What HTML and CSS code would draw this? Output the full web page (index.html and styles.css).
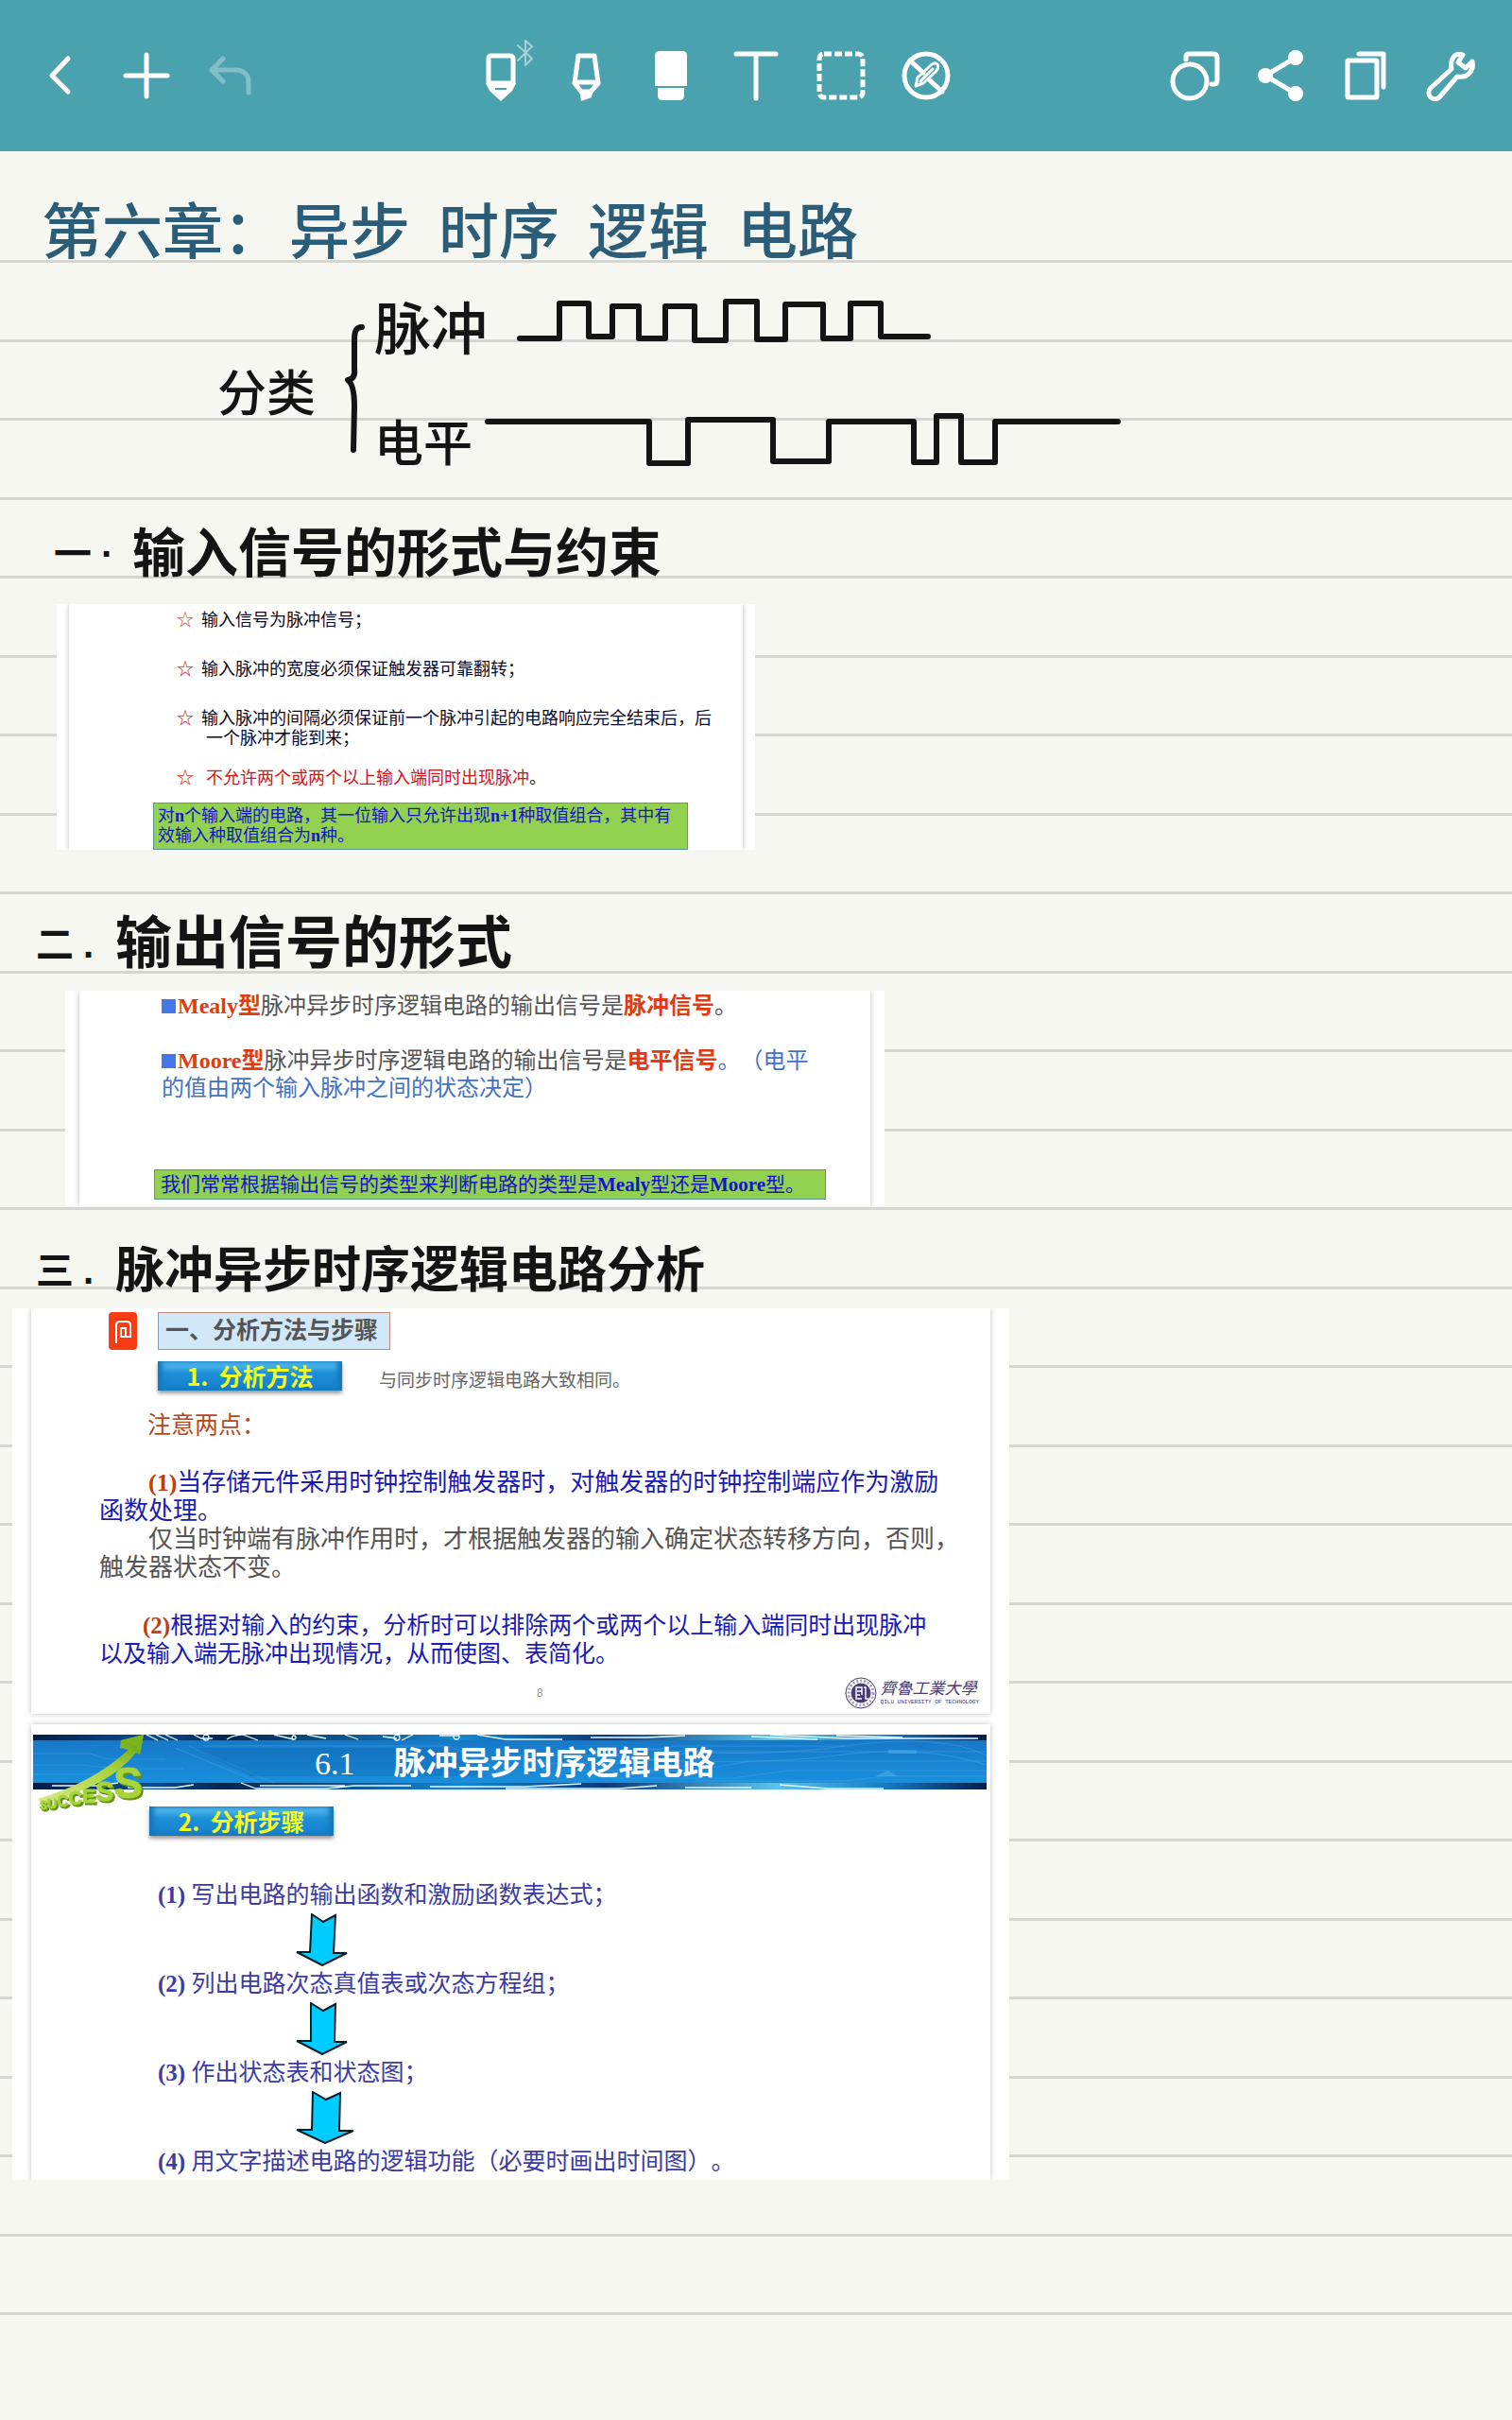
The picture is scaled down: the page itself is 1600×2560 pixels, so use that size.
FILE: index.html
```html
<!DOCTYPE html>
<html lang="zh-CN">
<head>
    <meta charset="utf-8">
    <meta name="viewport" content="width=device-width, initial-scale=1">
    <title>第六章：异步时序逻辑电路</title>
    <link rel="stylesheet" href="styles.css">
</head>
<body>
    <header class="toolbar">
        <div class="tools">
            <button type="button" class="tool" aria-label="返回">
                <svg viewBox="0 0 60 60"><path d="M37 12L20 30L37 47"/></svg>
            </button>
            <button type="button" class="tool" aria-label="添加">
                <svg viewBox="0 0 60 60"><path d="M30 8V52M8 30H52"/></svg>
            </button>
            <button type="button" class="tool" aria-label="撤销" disabled>
                <svg viewBox="0 0 60 60"><path d="M21 12L9 24L21 36M9 24H34C43 24 48 29 48 37V48"/></svg>
            </button>
        </div>
        <div class="tools">
            <button type="button" class="tool" aria-label="钢笔">
                <svg viewBox="0 0 60 60">
                    <path d="M17 38V12Q17 9 20 9H39Q43 9 43 12V38Z"/>
                    <path class="solid" d="M14 38H46L42 46L30 57L18 46Z"/>
                    <path class="cut" d="M24 44H36"/>
                    <path class="bluetooth" d="M48 -2L63 12L56 19V-7L63 -1L48 14"/>
                </svg>
            </button>
            <button type="button" class="tool" aria-label="荧光笔">
                <svg viewBox="0 0 60 60">
                    <path d="M22 9H39L43 38L35 47H25L18 38Z"/>
                    <path d="M19 37H42"/>
                    <path class="solid" d="M23 45H38L36 53L25 57Z"/>
                </svg>
            </button>
            <button type="button" class="tool" aria-label="橡皮擦">
                <svg viewBox="0 0 60 60">
                    <path class="solid" d="M13 41V9Q13 4 18 4H42Q47 4 47 9V41Z"/>
                    <path class="solid" d="M16 43H44V51Q44 56 39 56H21Q16 56 16 51Z"/>
                </svg>
            </button>
            <button type="button" class="tool" aria-label="文字">
                <svg viewBox="0 0 60 60"><path d="M9 7H51M30 7V54"/></svg>
            </button>
            <button type="button" class="tool" aria-label="选择">
                <svg viewBox="0 0 60 60"><rect class="dashed" x="7" y="7" width="46" height="46" rx="5"/></svg>
            </button>
            <button type="button" class="tool" aria-label="停用手写笔">
                <svg viewBox="0 0 60 60">
                    <circle cx="30" cy="30" r="23"/>
                    <path d="M13 14L27 27M34 35L47 47"/>
                    <path class="thin" d="M19 41L21 32L35 19Q39 15 42 18Q44 21 40 26L27 38Z"/>
                    <path class="thin" d="M24 36L37 23"/>
                </svg>
            </button>
        </div>
        <div class="tools">
            <button type="button" class="tool" aria-label="图形">
                <svg viewBox="0 0 60 60">
                    <circle cx="24" cy="36" r="18"/>
                    <path d="M20 13V10Q20 7 23 7H49Q53 7 53 11V35Q53 39 50 39H47"/>
                </svg>
            </button>
            <button type="button" class="tool" aria-label="分享">
                <svg viewBox="0 0 60 60">
                    <path d="M46 11L14 30L46 49"/>
                    <circle class="solid" cx="46" cy="11" r="8"/>
                    <circle class="solid" cx="14" cy="30" r="8"/>
                    <circle class="solid" cx="46" cy="49" r="8"/>
                </svg>
            </button>
            <button type="button" class="tool" aria-label="页面">
                <svg viewBox="0 0 60 60">
                    <rect x="11" y="14" width="31" height="39" rx="1"/>
                    <path d="M23 7H49V42"/>
                </svg>
            </button>
            <button type="button" class="tool" aria-label="设置">
                <svg viewBox="0 0 60 60"><path d="M31 23L9 43C3 49 11 59 18 53L37 31C48 33 55 25 53 15L46 22L38 16L43 8C35 5 29 12 31 23Z"/></svg>
            </button>
        </div>
    </header>

    <main class="paper">
        <h1 class="chapter">
            <span class="chapter-label">第六章：</span><span>异步</span><span>时序</span><span>逻辑</span><span>电路</span>
        </h1>

        <div class="classify">
            <span class="classify-name">分类</span>
            <svg class="brace" width="22" height="138" viewBox="0 0 22 138">
                <path d="M19 4C13 4 11 8 11 18V48C12 56 9 59 4 60C10 64 11 76 11 88L10 134"/>
            </svg>
            <div class="kinds">
                <div class="kind">
                    <span class="kind-name kind-pulse">脉冲</span>
                    <!-- 脉冲波形 -->
                    <svg class="wave" width="440" height="52" viewBox="546 316 440 52">
                        <path d="M550 357H592V320H623V355H648V323H676V357H704V323H735V359H768V318H801V358H831V321H871V357H900V320H932V355H982"/>
                    </svg>
                </div>
                <div class="kind">
                    <span class="kind-name">电平</span>
                    <!-- 电平波形 -->
                    <svg class="wave" width="680" height="60" viewBox="510 436 680 60">
                        <path d="M516 447H687V491H728V445H818V489H877V447H967V490H991V441H1017V490H1053V447H1183"/>
                    </svg>
                </div>
            </div>
        </div>

        <section class="part part-one">
            <h2 class="heading"><span class="number"><span>一</span><span>·</span></span>输入信号的形式与约束</h2>
            <div class="card card-rules">
                <div class="slide">
                    <ul class="rules">
                        <li><span class="star star-orange">☆</span><span>输入信号为脉冲信号；</span></li>
                        <li><span class="star">☆</span><span>输入脉冲的宽度必须保证触发器可靠翻转；</span></li>
                        <li class="rule-long"><span class="star">☆</span><span>输入脉冲的间隔必须保证前一个脉冲引起的电路响应完全结束后，后<br><span class="hang">一个脉冲才能到来；</span></span></li>
                        <li><span class="star">☆</span><span class="hang warn">不允许两个或两个以上输入端同时出现脉冲<span class="stop">。</span></span></li>
                    </ul>
                    <p class="note note-rules">对<b>n</b>个输入端的电路，其一位输入只允许出现<b>n+1</b>种取值组合，其中有<br>效输入种取值组合为<b>n</b>种。</p>
                </div>
            </div>
        </section>

        <section class="part part-two">
            <h2 class="heading"><span class="number"><span>二</span><span>.</span></span>输出信号的形式</h2>
            <div class="card card-types">
                <div class="slide">
                    <p class="type"><i class="square"></i><b class="key">Mealy型</b>脉冲异步时序逻辑电路的输出信号是<b class="key">脉冲信号</b>。</p>
                    <p class="type"><i class="square"></i><b class="key">Moore型</b>脉冲异步时序逻辑电路的输出信号是<b class="key">电平信号</b><span class="remark">。（电平<br>的值由两个输入脉冲之间的状态决定）</span></p>
                    <p class="note note-types">我们常常根据输出信号的类型来判断电路的类型是<b>Mealy</b>型还是<b>Moore</b>型。</p>
                </div>
            </div>
        </section>

        <section class="part part-three">
            <h2 class="heading"><span class="number"><span>三</span><span>.</span></span>脉冲异步时序逻辑电路分析</h2>
            <div class="card card-analysis">
                <div class="slide method">
                    <div class="method-title">
                        <svg class="badge" width="30" height="40" viewBox="0 0 30 40">
                            <rect width="30" height="40" rx="4" fill="#fa3c14"/>
                            <path d="M8 33V14Q8 10 12 10H19Q23 10 23 14V26H13V17H18V25" fill="none" stroke="#fff" stroke-width="2"/>
                        </svg>
                        <h3 class="method-name">一、分析方法与步骤</h3>
                    </div>
                    <div class="method-line">
                        <h4 class="plate">1. &nbsp;分析方法</h4>
                        <span class="similar">与同步时序逻辑电路大致相同。</span>
                    </div>
                    <p class="attention">注意两点：</p>
                    <div class="points">
                        <p class="point"><b>(1)</b>当存储元件采用时钟控制触发器时，对触发器的时钟控制端应作为激励<br>函数处理。</p>
                        <p class="point point-gray">仅当时钟端有脉冲作用时，才根据触发器的输入确定状态转移方向，否则，<br>触发器状态不变。</p>
                        <p class="point point-second"><b>(2)</b>根据对输入的约束，分析时可以排除两个或两个以上输入端同时出现脉冲<br>以及输入端无脉冲出现情况，从而使图、表简化。</p>
                    </div>
                    <div class="slide-foot">
                        <span class="page-number">8</span>
                        <div class="school">
                            <svg width="34" height="34" viewBox="0 0 34 34" fill="none" stroke="#493a72">
                                <circle cx="17" cy="17" r="16"/>
                                <circle cx="17" cy="17" r="13" stroke="#a79fbd" stroke-width="3" stroke-dasharray="2 2"/>
                                <circle cx="17" cy="17" r="10" fill="#493a72"/>
                                <path d="M12 22V11H18V15H13M16 19H12V23H18M20 11H22V23H25M18 15V19" stroke="#fff" stroke-width="1.4"/>
                            </svg>
                            <div class="school-text">
                                <span class="school-name">齊魯工業大學</span>
                                <span class="school-latin">QILU UNIVERSITY OF TECHNOLOGY</span>
                            </div>
                        </div>
                    </div>
                </div>

                <div class="slide steps-slide">
                    <div class="banner">
                        <svg class="circuit" viewBox="0 0 1009 58" preserveAspectRatio="none">
                            <defs>
                                <linearGradient id="edge">
                                    <stop offset="0" stop-color="#021c44"/>
                                    <stop offset=".12" stop-color="#0a4f98"/>
                                    <stop offset=".2" stop-color="#04264f"/>
                                    <stop offset=".45" stop-color="#1686d0"/>
                                    <stop offset=".6" stop-color="#0a3a78"/>
                                    <stop offset=".78" stop-color="#5ac4ee"/>
                                    <stop offset=".9" stop-color="#1576c0"/>
                                    <stop offset="1" stop-color="#031d48"/>
                                </linearGradient>
                                <linearGradient id="sea" x2="0" y2="1">
                                    <stop offset="0" stop-color="#1679c8"/>
                                    <stop offset="1" stop-color="#198fdc"/>
                                </linearGradient>
                            </defs>
                            <rect width="1009" height="58" fill="url(#edge)"/>
                            <rect y="6" width="1009" height="45" fill="url(#sea)"/>
                            <g fill="none" stroke="#4ba9e6" stroke-opacity=".45">
                                <path d="M0 20H60L80 26H140M0 32H50L90 36H160M0 42H70M150 14L240 51M165 12L255 51M180 12H440L500 40"/>
                                <path d="M520 30H640L700 18H1009M560 38H700L760 28H1009M600 46H740L800 38H1009M500 22H620L680 12H860M700 49H860L900 44H1009"/>
                                <path d="M640 14Q760 26 860 12T1009 22M620 24Q760 34 850 22T1009 32"/>
                            </g>
                            <path d="M170 14H430L480 44H230Z" fill="#0e62a8" fill-opacity=".28"/>
                            <g fill="none" stroke="#e4f8ff" stroke-width="1.3">
                                <path d="M120 0L132 6M130 0L143 6M140 0L153 6M170 0L178 4H190M205 5Q212 0 222 0L238 6M255 0L276 5M290 0L310 4M330 0L344 5M370 2L385 4M390 6L402 0M430 1H450M470 0L500 5H560M590 3H650L690 1M760 2L830 5M780 0L860 4H1000M850 1L920 3"/>
                                <path d="M20 54H70L90 51M100 56H150L170 53M220 51L236 57H310L340 54H400M240 54H330M420 55H520L580 52M500 57H620L660 54M690 56H760M790 53L840 57H900"/>
                                <circle cx="183" cy="3" r="3"/><circle cx="276" cy="3" r="2"/><circle cx="385" cy="3" r="3"/><circle cx="448" cy="2" r="3"/>
                            </g>
                            <path d="M890 44L905 38L915 44ZM905 16H935V20H905Z" fill="#5bbdf0" fill-opacity=".4"/>
                        </svg>
                        <h3 class="banner-title"><span class="banner-number">6.1</span><span>脉冲异步时序逻辑电路</span></h3>
                        <svg class="success" width="124" height="96" viewBox="0 0 124 96">
                            <defs>
                                <linearGradient id="leaf" x1="0" y1="1" x2="1" y2="0">
                                    <stop offset="0" stop-color="#d8ec8a"/>
                                    <stop offset=".6" stop-color="#a9d23c"/>
                                    <stop offset="1" stop-color="#5f9c12"/>
                                </linearGradient>
                            </defs>
                            <path d="M2 71Q60 54 98 19L89 17L90 9L114 3L110 24L106 22Q78 58 6 76Z" fill="url(#leaf)"/>
                            <path d="M90 9L114 3L110 24L106 15Z" fill="#7db31c"/>
                            <text class="success-word" x="4" y="82"><tspan font-size="12">S</tspan><tspan font-size="14" dy="-1">U</tspan><tspan font-size="17" dy="-2">C</tspan><tspan font-size="20" dy="-2">C</tspan><tspan font-size="21" dy="-2">E</tspan><tspan font-size="29" dy="-2">S</tspan><tspan font-size="46" dy="-3">S</tspan></text>
                        </svg>
                    </div>
                    <h4 class="plate plate-steps">2. &nbsp;分析步骤</h4>
                    <ol class="steps">
                        <li><b>(1)</b> 写出电路的输出函数和激励函数表达式；
                            <svg class="arrow" width="56" height="56" viewBox="0 0 56 56"><path d="M17 1L29 9L42 2L40 42H54L28 55L1 41H15Z"/></svg>
                        </li>
                        <li><b>(2)</b> 列出电路次态真值表或次态方程组；
                            <svg class="arrow" width="56" height="56" viewBox="0 0 56 56"><path d="M16 1L29 9L42 2L41 42H54L28 55L1 41H16Z"/></svg>
                        </li>
                        <li><b>(3)</b> 作出状态表和状态图；
                            <svg class="arrow" width="62" height="56" viewBox="0 0 62 56"><path d="M18 1L32 9L47 2L46 42H61L31 55L1 41H17Z"/></svg>
                        </li>
                        <li><b>(4)</b> 用文字描述电路的逻辑功能（必要时画出时间图）。</li>
                    </ol>
                </div>
            </div>
        </section>
    </main>
</body>
</html>
```
FILE: styles.css
```css
* {
    box-sizing: border-box;
}

body {
    margin: 0;
    background: #f6f7f1;
    font-family: "Liberation Sans", "Noto Sans CJK SC", sans-serif;
    text-spacing-trim: space-all;
}

h1, h2, h3, h4, p, ul, ol {
    margin: 0;
    padding: 0;
    list-style: none;
}

svg {
    display: block;
}

/* 顶部工具栏 */
.toolbar {
    display: flex;
    justify-content: space-between;
    align-items: center;
    height: 160px;
    padding: 0 20px;
    background: #4ba2af;
}

.tools {
    display: flex;
}

.tool {
    display: flex;
    justify-content: center;
    align-items: center;
    width: 90px;
    height: 90px;
    padding: 0;
    border: none;
    background: none;
}

.tool:disabled {
    opacity: 0.3;
}

.tool svg {
    width: 60px;
    height: 60px;
    overflow: visible;
    fill: none;
    stroke: #fff;
    stroke-width: 5;
    stroke-linecap: round;
    stroke-linejoin: round;
}

.tool .solid {
    fill: #fff;
    stroke: none;
}

.tool .thin {
    stroke-width: 3;
}

.tool .cut {
    stroke: #4ba2af;
    stroke-width: 2;
    stroke-linecap: butt;
}

.tool .bluetooth {
    stroke-width: 2;
    opacity: 0.5;
}

.tool .dashed {
    stroke-dasharray: 8 3;
    stroke-linecap: butt;
}

/* 横线纸 */
.paper {
    min-height: 2400px;
    padding: 46px 0 254px;
    background:
        linear-gradient(#f6f7f1, #f6f7f1) top / 100% 100px no-repeat,
        linear-gradient(#f6f7f1, #f6f7f1) bottom / 100% 80px no-repeat,
        repeating-linear-gradient(#f6f7f1 0 32px, #d5d6d1 32px 35px, #f6f7f1 35px 115px, #d5d6d1 115px 118px, #f6f7f1 118px 167px);
    color: #141414;
}

.chapter {
    display: flex;
    gap: 30px;
    padding-left: 44px;
    line-height: 80px;
    font-size: 64px;
    font-weight: 500;
    white-space: nowrap;
    color: #2b5c78;
}

.chapter-label {
    width: 232px;
}

.classify {
    display: flex;
    align-items: center;
    height: 188px;
    margin-top: 24px;
    padding-left: 230px;
    font-size: 52px;
    font-weight: 500;
}

.classify-name {
    padding-top: 16px;
}

.brace {
    margin: 14px 10px 0 30px;
}

.brace path,
.wave path {
    fill: none;
    stroke: #141414;
    stroke-width: 6;
    stroke-linecap: round;
    stroke-linejoin: round;
}

.wave {
    overflow: visible;
}

.kinds {
    display: flex;
    flex-direction: column;
    gap: 56px;
}

.kind {
    display: flex;
    align-items: center;
    height: 66px;
}

.kind-name {
    width: 114px;
}

.kind-pulse {
    width: 150px;
    font-size: 60px;
}

.heading {
    display: flex;
    align-items: center;
    line-height: 64px;
    font-weight: 700;
}

.number {
    display: flex;
    gap: 10px;
    font-size: 40px;
}

.part-one {
    margin-top: 56px;
}

.part-one .heading {
    padding-left: 57px;
    font-size: 56px;
}

.part-one .number {
    width: 83px;
}

.part-two {
    margin-top: 68px;
}

.part-two .heading {
    padding-left: 38px;
    font-size: 60px;
}

.part-three {
    margin-top: 36px;
}

.part-three .heading {
    padding-left: 38px;
    font-size: 52px;
}

.part-two .number,
.part-three .number {
    width: 84px;
}

/* 贴入的课件 */
.card {
    overflow: hidden;
    max-width: 100%;
    background: #fff;
    font-family: "Liberation Serif", "Noto Sans CJK SC", serif;
}

.slide {
    background: #fff;
    box-shadow: 0 0 6px rgba(0, 0, 0, 0.25);
    white-space: nowrap;
}

.note {
    border: 1px solid #5b93a0;
    background: #92d050;
    color: #1414c8;
}

.card-rules {
    width: 739px;
    margin: 21px 0 0 60px;
    padding: 0 13px;
}

.rules {
    padding: 7px 0 0 114px;
    line-height: 21px;
    font-size: 18px;
    color: #0a0a28;
}

.rules li {
    display: flex;
    margin-bottom: 31px;
}

.rules .rule-long {
    margin-bottom: 21px;
}

.rules li:last-child {
    margin-bottom: 15px;
}

.star {
    width: 26px;
    color: #d22020;
}

.star-orange {
    color: #e0501e;
}

.hang {
    padding-left: 5px;
}

.warn {
    color: #d21414;
}

.stop {
    color: #141414;
}

.note-rules {
    width: 566px;
    margin-left: 89px;
    padding: 3px 4px;
    line-height: 21px;
    font-size: 18px;
}

.card-types {
    width: 867px;
    height: 228px;
    margin: 17px 0 0 69px;
    padding: 0 15px;
}

.card-types .slide {
    height: 100%;
    padding-top: 2px;
}

.type {
    margin: 0 0 29px 87px;
    line-height: 29px;
    font-size: 24px;
    color: #555;
}

.square {
    display: inline-block;
    width: 15px;
    height: 15px;
    margin-right: 2px;
    background: #4677e8;
}

.key {
    color: #e03c10;
}

.remark {
    color: #4472c4;
}

.note-types {
    width: 711px;
    margin: 71px 0 0 79px;
    padding-left: 6px;
    line-height: 30px;
    font-size: 21px;
}

.card-analysis {
    width: 1055px;
    margin: 8px 0 0 13px;
    padding: 0 20px;
}

.method {
    padding: 4px 0 5px;
}

.method-title {
    display: flex;
    gap: 22px;
    padding-left: 82px;
}

.method-name {
    width: 246px;
    padding-left: 7px;
    border: 1px solid #c88474;
    background: #d0e8f8;
    line-height: 38px;
    font-size: 25px;
    color: #555;
}

.method-line {
    display: flex;
    align-items: flex-end;
    gap: 39px;
    margin-top: 12px;
    padding-left: 134px;
}

.plate {
    width: 195px;
    height: 31px;
    background: linear-gradient(#62c8f6, #1e90d8 40%, #1580cc);
    box-shadow: inset 5px 0 5px #1678bc, inset -5px 0 5px #1678bc, 0 3px 4px rgba(0, 0, 0, 0.4);
    line-height: 31px;
    font-family: "Noto Sans CJK SC", sans-serif;
    font-size: 25px;
    text-align: center;
    color: #f4ff1e;
}

.similar {
    line-height: 21px;
    font-size: 19px;
    color: #666;
}

.attention {
    margin-top: 22px;
    padding-left: 123px;
    line-height: 30px;
    font-size: 25px;
    color: #b4481a;
}

.points {
    margin-top: 31px;
    padding-left: 72px;
    line-height: 30px;
    font-size: 26px;
}

.point {
    text-indent: 52px;
    color: #1a1ab4;
}

.point b {
    color: #c03c14;
}

.point-gray {
    color: #555;
}

.point-second {
    margin-top: 31px;
    text-indent: 46px;
    font-size: 25px;
}

.slide-foot {
    display: flex;
    align-items: center;
    justify-content: space-between;
    margin-top: 9px;
    padding: 0 12px 0 535px;
}

.page-number {
    font-family: "Liberation Sans", sans-serif;
    font-size: 12px;
    color: #999;
}

.school {
    display: flex;
    align-items: center;
    gap: 4px;
    color: #493a72;
}

.school-text {
    display: flex;
    flex-direction: column;
}

.school-name {
    line-height: 20px;
    font-size: 17px;
    font-style: italic;
}

.school-latin {
    line-height: 8px;
    font-family: "Liberation Mono", monospace;
    font-size: 6px;
}

.steps-slide {
    margin-top: 11px;
    padding: 11px 0 4px;
}

.banner {
    position: relative;
    height: 58px;
    margin: 0 4px 0 2px;
}

.circuit {
    position: absolute;
    width: 100%;
    height: 100%;
}

.banner-title {
    position: relative;
    display: flex;
    gap: 41px;
    padding-left: 298px;
    line-height: 62px;
    font-size: 34px;
    color: #fff;
}

.banner-number {
    font-weight: 400;
}

.success {
    position: absolute;
    top: -3px;
    left: 3px;
    overflow: visible;
    font-family: "Liberation Sans", sans-serif;
    font-weight: 700;
}

.success-word {
    fill: #a8d43a;
    stroke: #a8d43a;
    filter: drop-shadow(2px 2px 0 #5f9412);
}

.plate-steps {
    margin: 18px 0 0 125px;
}

.steps {
    margin-top: 48px;
    padding-left: 134px;
    line-height: 30px;
    font-size: 25px;
    color: #3c3ca4;
}

.arrow {
    margin: 4px 0 4px 146px;
    fill: #00ccff;
    stroke: #0a1e28;
    stroke-width: 2;
}
```
